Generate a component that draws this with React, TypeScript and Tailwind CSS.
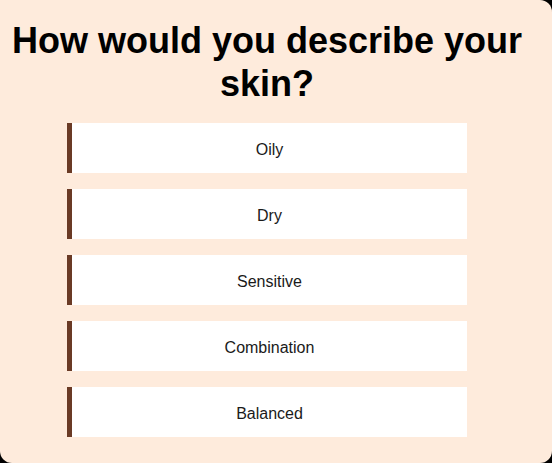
import React from "react";

const options = ["Oily", "Dry", "Sensitive", "Combination", "Balanced"];

export default function App() {
  return (
    <div className="w-[552px] h-[463px] bg-black" style={{ fontFamily: '"Liberation Sans", Arial, sans-serif' }}>
      <div className="w-full h-full bg-[#feebdc] rounded-tr-[12px] rounded-b-[12px] flex flex-col items-center pr-[18px] pt-[19px]">
        <h1 className="text-[36px] leading-[43px] font-bold text-black text-center w-[534px]">
          How would you describe your skin?
        </h1>
        <div className="flex flex-col gap-4 mt-[18px]">
          {options.map((o) => (
            <button
              key={o}
              className="w-[400px] h-[50px] pt-[3px] bg-white border-l-[5px] border-[#6a3a25] text-[16px] text-[#1a1a1a] flex items-center justify-center"
            >
              {o}
            </button>
          ))}
        </div>
      </div>
    </div>
  );
}
